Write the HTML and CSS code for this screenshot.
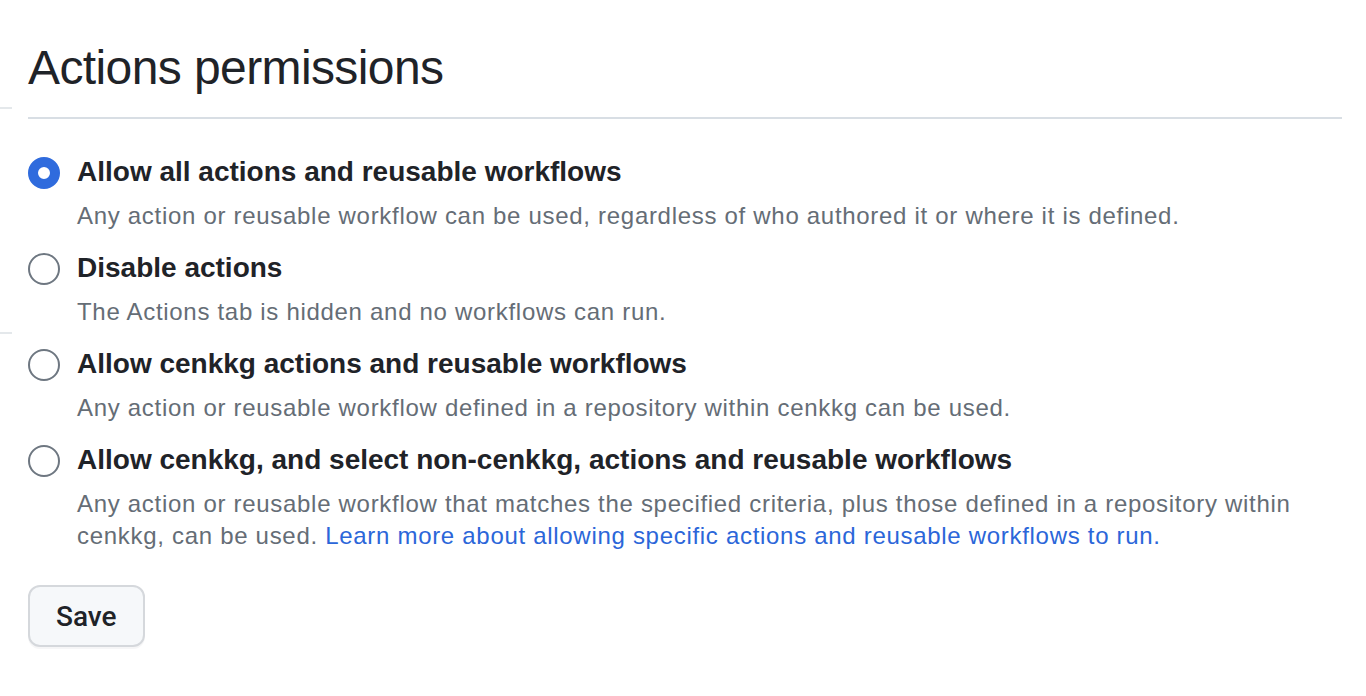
FILE: index.html
```html
<!DOCTYPE html>
<html lang="en">
<head>
<meta charset="utf-8">
<title>Actions permissions</title>
<link rel="stylesheet" href="styles.css">
</head>
<body>
<div class="layout">
  <aside class="side">
    <div class="side-divider first"></div>
    <div class="side-divider second"></div>
  </aside>
  <main class="main">
    <h2 class="subhead">Actions permissions</h2>
    <form class="options">
      <div class="option">
        <span class="radio checked"></span>
        <div class="option-text">
          <div class="option-label">Allow all actions and reusable workflows</div>
          <p class="option-note">Any action or reusable workflow can be used, regardless of who authored it or where it is defined.</p>
        </div>
      </div>
      <div class="option">
        <span class="radio"></span>
        <div class="option-text">
          <div class="option-label">Disable actions</div>
          <p class="option-note">The Actions tab is hidden and no workflows can run.</p>
        </div>
      </div>
      <div class="option">
        <span class="radio"></span>
        <div class="option-text">
          <div class="option-label">Allow cenkkg actions and reusable workflows</div>
          <p class="option-note">Any action or reusable workflow defined in a repository within cenkkg can be used.</p>
        </div>
      </div>
      <div class="option">
        <span class="radio"></span>
        <div class="option-text">
          <div class="option-label">Allow cenkkg, and select non-cenkkg, actions and reusable workflows</div>
          <p class="option-note">Any action or reusable workflow that matches the specified criteria, plus those defined in a repository within cenkkg, can be used. <a href="#" class="link">Learn more about allowing specific actions and reusable workflows to run.</a></p>
        </div>
      </div>
      <button type="button" class="btn">Save</button>
    </form>
  </main>
</div>
</body>
</html>
```
FILE: styles.css
```css
* { box-sizing: border-box; }
html, body { margin: 0; padding: 0; background: #ffffff; }
body {
  font-family: "Liberation Sans", Arial, sans-serif;
  color: #1f2328;
  width: 1366px;
  height: 696px;
  overflow: hidden;
}
.layout {
  display: flex;
  gap: 16px;
}
.side {
  width: 12px;
  flex: none;
  display: flex;
  flex-direction: column;
}
.side-divider {
  height: 2px;
  background: #e4e8eb;
}
.side-divider.first { margin-top: 107px; }
.side-divider.second { margin-top: 223px; }
.main {
  flex: 1;
  padding-right: 24px;
}
.subhead {
  margin: 32px 0 0;
  padding-bottom: 13px;
  font-size: 48px;
  line-height: 72px;
  font-weight: 400;
  letter-spacing: -0.6px;
  color: #1f2328;
  border-bottom: 2px solid #d8dee4;
}
.options {
  display: flex;
  flex-direction: column;
  align-items: flex-start;
  padding-top: 33px;
}
.option {
  display: flex;
  gap: 17px;
  margin-bottom: 16px;
}
.radio {
  flex: none;
  width: 32px;
  height: 32px;
  margin-top: 5px;
  border-radius: 50%;
  border: 2px solid #6e7781;
  background: #fff;
}
.radio.checked {
  border: 10px solid #2f6bdd;
}
.option-label {
  font-size: 28px;
  line-height: 40px;
  font-weight: 700;
  color: #1f2328;
}
.option-note {
  margin: 8px 0 0;
  font-size: 24px;
  line-height: 32px;
  letter-spacing: 0.7px;
  color: #656d76;
}
.link {
  color: #2b66d9;
  text-decoration: none;
}
.btn {
  margin-top: 17px;
  height: 62px;
  padding: 0 26px;
  font-family: Roboto, "Liberation Sans", sans-serif;
  font-size: 28px;
  font-weight: 500;
  color: #1f2328;
  background: #f6f8fa;
  border: 2px solid #d5d8dc;
  border-radius: 12px;
  box-shadow: 0 2px 0 rgba(31, 35, 40, 0.04);
}
```
